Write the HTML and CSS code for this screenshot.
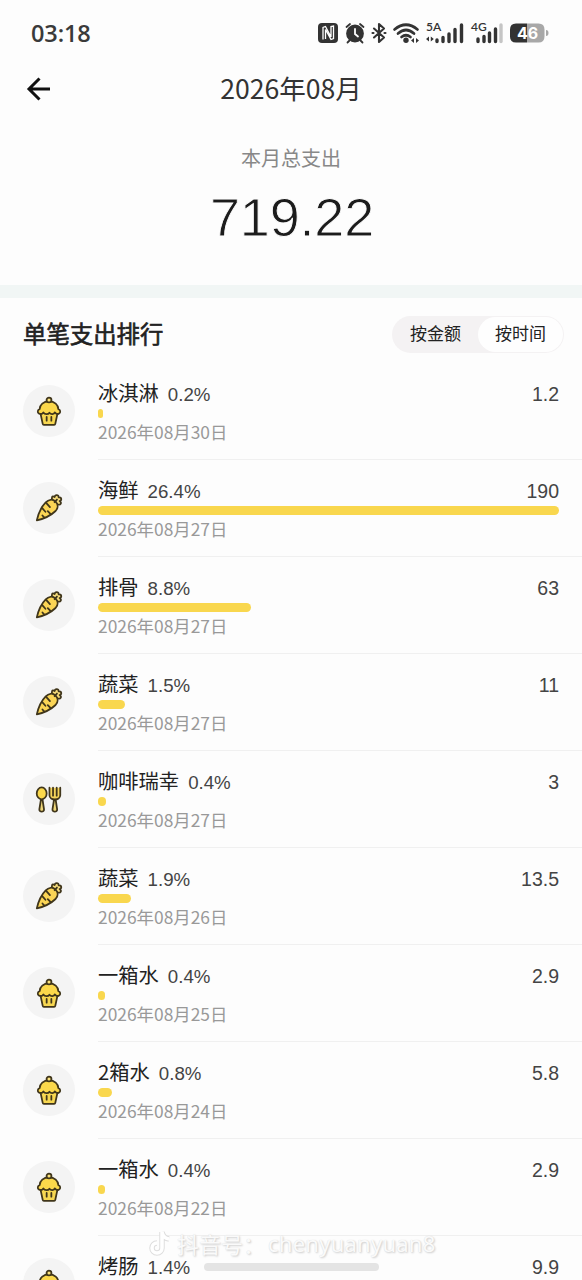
FILE: index.html
```html
<!DOCTYPE html>
<html lang="zh-CN">
<head>
<meta charset="utf-8">
<meta name="viewport" content="width=device-width">
<title>2026年08月</title>
<link rel="stylesheet" href="styles.css">
</head>
<body>
<svg class="defs" width="0" height="0">
  <defs>
    <symbol id="cupcake" viewBox="0 0 32 32">
      <g stroke="#40361b" stroke-width="1.9" stroke-linejoin="round" stroke-linecap="round">
        <path fill="#f7d751" d="M6.800 18 9.300 29.700Q9.500 30.700 10.500 30.700H21.500Q22.500 30.700 22.700 29.700L25.200 18Z"/>
        <path fill="#fbd84b" d="M5.500 18.800C3 17.500 4 14.500 6 14 6.200 9.500 10 5.800 16 5.800S25.800 9.500 26 14C28 14.500 29 17.500 26.500 18.800 24.500 19.700 23 18.800 22.300 17.500 21.500 19.500 18 20 16.500 17.800 15 20 11.500 19.800 10 17.500 9 19 7.500 19.700 5.500 18.800Z"/>
        <circle cx="16" cy="4.300" r="2.600" fill="#fbe27b"/>
        <path fill="none" d="M13.500 22.300V26.300M18.500 22.300V26.300"/>
      </g>
    </symbol>
    <symbol id="carrot" viewBox="0 0 32 32">
      <g stroke="#40361b" stroke-width="1.900" stroke-linejoin="round" stroke-linecap="round">
        <path fill="#f7dd7b" d="M20 8C18 5 19.300 2.500 22 4.300 22.300 1.500 26.500 1.500 26.300 4.700 29.500 4 30 8 27.300 8.600 30 10.500 28.500 13.500 25 12Z"/>
        <path fill="#fbd555" d="M3 29.200C4.500 22.500 8 14.500 12.500 10 15.500 7 19.700 6 22.800 9S26 16 23 19.200C18.500 23.500 10.500 27.500 3 29.200Z"/>
        <path fill="none" d="M13 10.500 17 15M9 16.500 12.200 20M17.500 22.300 14.700 19.300M10.800 26 9 24M22 9.800 24.500 7"/>
      </g>
    </symbol>
    <symbol id="cutlery" viewBox="0 0 32 32">
      <g stroke="#40361b" stroke-width="1.900" stroke-linejoin="round" stroke-linecap="round">
        <path fill="#efd779" d="M7.500 16 5.700 27C5.500 30.300 10.900 30.300 10.700 27L9 16Z"/>
        <ellipse cx="8.200" cy="10" rx="5.300" ry="6.300" fill="#fbd84b"/>
        <path fill="#efd779" d="M21.500 16 19.700 27C19.500 30.300 24.900 30.300 24.700 27L23 16Z"/>
        <path fill="#f4d45b" d="M16.500 4V12C16.500 18 28 18 28 12V4M20.300 4V12.500M24.200 4V12.500"/>
      </g>
    </symbol>
  </defs>
</svg>

<div class="screen">
  <header class="status">
    <time class="clock">03:18</time>
    <svg class="status-icons" width="234" height="30" viewBox="0 -3 234 30">
      <rect x="0" y="2" width="20" height="20" rx="4" fill="#333"/>
      <path d="M5 18.500V6.500L7.500 5.500 13 16V5.500L15.500 5V17.500L13 18.500 7.500 8.500V18" fill="none" stroke="#fff" stroke-width="1.300"/>
      <g fill="none" stroke="#333" stroke-width="1.800" stroke-linecap="round">
        <circle cx="37" cy="12.500" r="8" fill="#333"/>
        <path d="M28.500 6 32 3M45.500 6 42 3M31.500 19.500 29.500 21.500M42.500 19.500 44.500 21.500"/>
        <path d="M37 8V13L40 15.500" stroke="#fff"/>
      </g>
      <path d="M56 7.500 66 16.500 61 21V3L66 7.500 56 16.500M54.500 12H55.500M66.500 12H67.500" fill="none" stroke="#333" stroke-width="2.100" stroke-linecap="round" stroke-linejoin="round"/>
      <g fill="none" stroke="#333" stroke-width="2.700" stroke-linecap="round">
        <path d="M76.500 8.500Q88 -1 99.500 8.500M80 12.500Q88 5.500 96 12.500M83.500 16Q88 12.500 92.500 16"/>
      </g>
      <circle cx="88" cy="19.300" r="2.700" fill="#333"/>
      <path d="M96 17V22L93 19.500ZM98 17V22L101 19.500ZM111 15.500V20.500L108 18ZM112.800 15.500V20.500L115.800 18Z" fill="#333"/>
      <text class="net" x="108" y="10">5A</text>
      <g stroke="#333" stroke-width="3.400" stroke-linecap="round">
        <path d="M119 19V20.500M125 16.500V20.500M131 13V20.500M137 8.500V20.500M143.500 4V20.500"/>
        <path d="M160 18V20.500M166 15.500V20.500M171.500 12V20.500M177.500 8V20.500"/>
        <path d="M183 4V20.500" stroke="#c5c5c5"/>
      </g>
      <text class="net" x="153" y="10">4G</text>
      <path d="M209 2.500H198Q192 2.500 192 8.500V15.500Q192 21.500 198 21.500H209Z" fill="#333"/>
      <path d="M209 2.500H220.500Q226.500 2.500 226.500 8.500V15.500Q226.500 21.500 220.500 21.500H209ZM228 9Q230.500 9 230.500 12T228 15Z" fill="#a8a8a8"/>
      <text class="charge" x="199" y="18">46</text>
    </svg>
  </header>

  <nav class="navbar">
    <svg class="back" width="26" height="26" viewBox="0 0 26 26"><path d="M14.500 2.500 4 13 14.500 23.500M4 13H25" fill="none" stroke="#111" stroke-width="3"/></svg>
    <h1 class="month">2026年08月</h1>
  </nav>

  <section class="summary">
    <p class="summary-label">本月总支出</p>
    <p class="summary-total">719.22</p>
  </section>

  <section class="ranking">
    <div class="ranking-head">
      <h2 class="ranking-title">单笔支出排行</h2>
      <div class="tabs"><span class="tab">按金额</span><span class="tab tab-on">按时间</span></div>
    </div>
    <ul class="list" id="list"></ul>
  </section>

  <div class="watermark">
    <svg width="26" height="28" viewBox="0 0 26 28"><path d="M14 3V19A5 5 0 1 1 9 14M14 3Q15 9 21 10" fill="none" stroke="#dedede" stroke-width="5.500"/><path d="M14 3V19A5 5 0 1 1 9 14M14 3Q15 9 21 10" fill="none" stroke="#fff" stroke-width="3.500"/></svg>
    <span>抖音号：</span><span class="handle">chenyuanyuan8</span>
  </div>
  <div class="home-bar"></div>
</div>
<script src="app.js"></script>
</body>
</html>
```
FILE: styles.css
```css
* { box-sizing: border-box; }
body {
  margin: 0;
  background: #fdfdfd;
  color: #222;
  font-family: "Noto Sans CJK SC", sans-serif;
}
h1, h2, p, ul { margin: 0; padding: 0; font-weight: 400; }
.defs { position: absolute; }
.screen {
  position: relative;
  width: 582px;
  height: 1280px;
  overflow: hidden;
}
.status {
  display: flex;
  justify-content: space-between;
  align-items: center;
  height: 66px;
  padding: 0 30px 0 31px;
}
.clock {
  font: 600 23.5px/30px "Open Sans", sans-serif;
  letter-spacing: -0.1px;
  color: #3a3a3a;
}
.net { font: 600 12px Lato, sans-serif; fill: #333; }
.charge { font: 700 16px Inter, sans-serif; fill: #fff; }
.navbar {
  display: grid;
  grid-template-columns: 1fr auto 1fr;
  align-items: center;
  height: 46px;
  padding: 0 25px;
}
.month { margin-top: -2px; font-size: 26.6px; line-height: 40px; color: #333; }
.summary {
  height: 186px;
  padding-top: 31px;
  border-bottom: 13px solid #f1f6f5;
  text-align: center;
}
.summary-label { font-size: 20px; line-height: 30px; color: #888; }
.summary-total {
  margin-top: 12px;
  padding-left: 2px;
  font: 54px/64px "Liberation Sans", sans-serif;
  letter-spacing: -0.2px;
  color: #1c1c1c;
  -webkit-text-stroke: 0.9px #fdfdfd;
}
.ranking-head {
  display: flex;
  justify-content: space-between;
  height: 65px;
  padding: 17px 18px 0 23px;
}
.ranking-title {
  font-size: 23.4px;
  line-height: 36px;
  -webkit-text-stroke: 0.6px #222;
}
.tabs {
  display: flex;
  width: 172px;
  height: 37px;
  margin-top: 1px;
  padding: 1px;
  border-radius: 19px;
  background: #f4f2f3;
}
.tab {
  flex: 1;
  border-radius: 18px;
  font-size: 17px;
  line-height: 32px;
  text-align: center;
}
.tab-on { background: #fefefe; }
.list { list-style: none; }
.row { display: flex; height: 97px; padding-left: 23px; }
.avatar {
  display: grid;
  place-items: center;
  width: 52px;
  height: 52px;
  margin: 22px 23px 0 0;
  border-radius: 50%;
  background: #f4f4f4;
}
.entry {
  flex: 1;
  padding: 14px 23px 0 0;
  border-bottom: 1px solid #f0f0f0;
}
.line { display: flex; align-items: baseline; height: 32px; line-height: 30px; }
.name { font-size: 20.3px; }
.pct, .amount { font-family: "Liberation Sans", sans-serif; color: #444; }
.pct { margin-left: 9px; font-size: 18.7px; }
.amount { margin-left: auto; font-size: 19.5px; }
.bar { height: 9px; border-radius: 4.5px; background: #f9d74e; }
.date { margin-top: 2px; font-size: 17.4px; line-height: 24px; color: #999; }
.watermark {
  position: absolute;
  left: 148px;
  top: 1227px;
  display: flex;
  align-items: center;
  height: 32px;
  gap: 3px;
  font-size: 22px;
  color: #fafafa;
  text-shadow: 1px 1px 2px #ccc, 0 0 1px #ddd;
}
.handle { font-family: "Noto Sans", sans-serif; letter-spacing: 0.25px; }
.home-bar {
  position: absolute;
  left: 204px;
  top: 1263px;
  width: 175px;
  height: 8px;
  border-radius: 4px;
  background: #e4e4e4;
}
```
FILE: app.js
```js
// icon, name, share, amount, day of month, bar width in px
const entries = [
  ["cupcake", "冰淇淋", "0.2%", "1.2", "30", 5],
  ["carrot", "海鲜", "26.4%", "190", "27", 461],
  ["carrot", "排骨", "8.8%", "63", "27", 153],
  ["carrot", "蔬菜", "1.5%", "11", "27", 27],
  ["cutlery", "咖啡瑞幸", "0.4%", "3", "27", 8],
  ["carrot", "蔬菜", "1.9%", "13.5", "26", 33],
  ["cupcake", "一箱水", "0.4%", "2.9", "25", 7],
  ["cupcake", "2箱水", "0.8%", "5.8", "24", 14],
  ["cupcake", "一箱水", "0.4%", "2.9", "22", 7],
  ["cupcake", "烤肠", "1.4%", "9.9", "22", 25]
];
document.getElementById("list").innerHTML = entries.map(([icon, name, pct, amount, day, width]) => `
  <li class="row">
    <div class="avatar"><svg width="30" height="30"><use href="#${icon}"/></svg></div>
    <div class="entry">
      <div class="line"><span class="name">${name}</span><span class="pct">${pct}</span><span class="amount">${amount}</span></div>
      <div class="bar" style="width:${width}px"></div>
      <div class="date">2026年08月${day}日</div>
    </div>
  </li>`).join("");
```
